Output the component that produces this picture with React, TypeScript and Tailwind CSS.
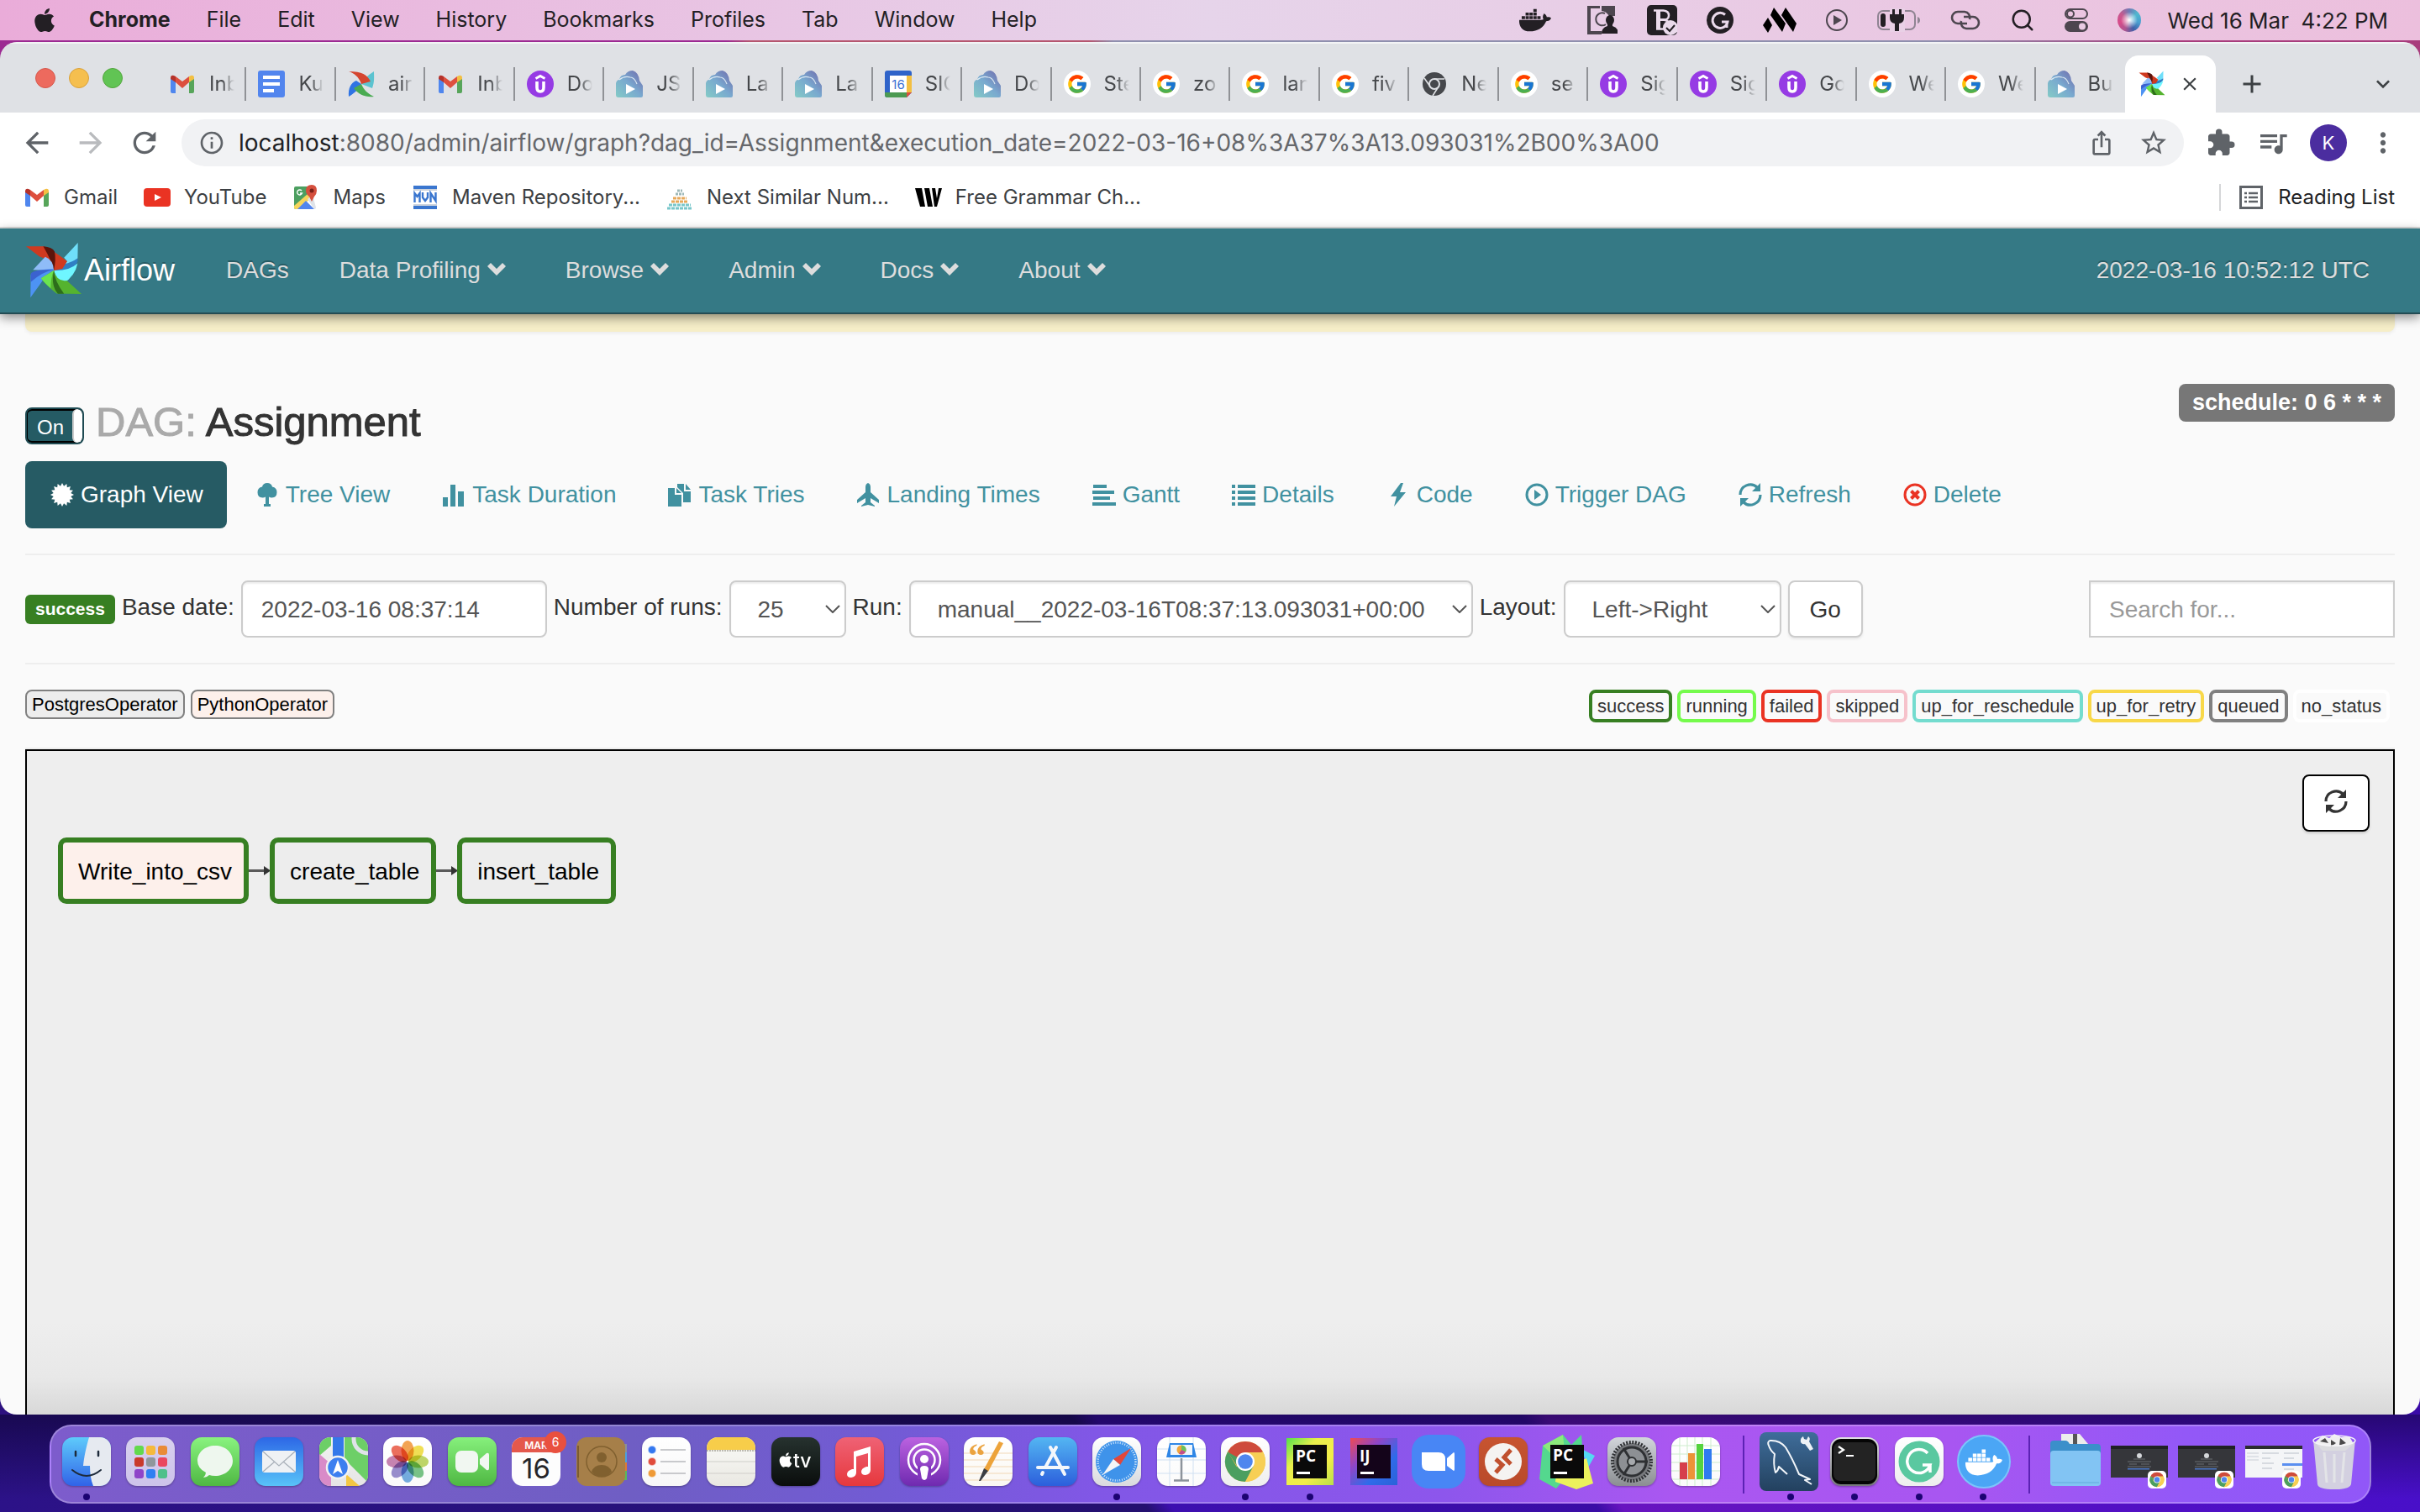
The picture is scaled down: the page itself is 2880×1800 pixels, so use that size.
import type { ReactNode } from "react";
import { FaApple, FaDocker } from "react-icons/fa";
import { FcGoogle } from "react-icons/fc";
import {
  MdArrowBack,
  MdArrowForward,
  MdRefresh,
  MdInfoOutline,
  MdIosShare,
  MdStarBorder,
  MdExtension,
  MdQueueMusic,
  MdMoreVert,
  MdAdd,
  MdClose,
  MdExpandMore,
} from "react-icons/md";
import { LuSearch } from "react-icons/lu";

/* ------------------------------------------------------------------ */
/* Shared logos                                                        */
/* ------------------------------------------------------------------ */

function Pinwheel({ size }: { size: number }) {
  return (
    <svg width={size} height={size} viewBox="32 28 206 204" aria-hidden="true">
      <path d="M222 30 L172 84 L183 97 L165 128 L221 86 Z" fill="#6fdffa" />
      <path d="M221 86 Q205 98 172 108 L135 130 L170 134 Q210 124 221 98 Z" fill="#2f7fc4" />
      <path d="M135 130 Q190 132 221 104 Q212 150 168 178 Q146 166 135 130 Z" fill="#6ff6ff" />
      <path d="M35 43 L100 43 Q134 58 183 97 L166 124 L135 130 Q120 88 84 80 Z" fill="#cf3a20" />
      <path d="M97 43 Q130 45 138 62 Q144 90 135 130 Q128 96 97 43 Z" fill="#5c140b" />
      <path d="M104 81 Q134 92 135 130 L60 128 Z" fill="#8fbcf8" />
      <path d="M52 146 Q68 126 135 124 L135 130 Q110 140 88 176 L51 228 Z" fill="#4d93f3" />
      <path d="M52 142 Q60 126 135 127 Q90 136 52 172 Z" fill="#3b62cf" />
      <path d="M135 130 L89 158 Q108 184 145 213 L235 215 L182 166 Q146 172 135 130 Z" fill="#55b32f" />
      <path d="M135 130 Q138 168 172 214 L150 214 Q124 186 135 130 Z" fill="#2d6d1b" />
      <path d="M135 130 L89 158 Q100 174 124 194 Q124 156 135 130 Z" fill="#6be34f" />
    </svg>
  );
}

function FlatPinwheel() {
  return (
    <svg width="32" height="32" viewBox="-1 -1 32 32" aria-hidden="true">
      <path d="M30 0 C22 5 17 10 15 15 L28 20 C31 12 30 6 30 0 Z" fill="#5cc3d0" />
      <path d="M0 0 C16 0 22 4 26 12 L15 15 C12 6 6 2 0 0 Z" fill="#d5452f" />
      <path d="M0 30 C-1 20 3 13 9 11 L15 15 C13 20 8 25 0 30 Z" fill="#2f74e4" />
      <path d="M30 30 C20 31 12 28 6 20 L15 15 C18 22 22 26 30 30 Z" fill="#4aab52" />
    </svg>
  );
}

function GmailIcon() {
  return (
    <svg width="32" height="32" viewBox="0 0 32 32" aria-hidden="true">
      <path d="M2 9 L8 13 V27 H4 Q2 27 2 25 Z" fill="#4f86ee" />
      <path d="M24 13 L30 9 V25 Q30 27 28 27 H24 Z" fill="#57a55a" />
      <path d="M2 9 Q2 5 6 6 L8 7 V14 L2 10 Z" fill="#b5322a" />
      <path d="M24 7 L26 6 Q30 5 30 9 V10 L24 14 Z" fill="#f3bf42" />
      <path d="M8 7 L16 13 L24 7 V14 L16 21 L8 14 Z" fill="#dd4f3e" />
    </svg>
  );
}

function DocsIcon() {
  return (
    <svg width="32" height="32" viewBox="0 0 32 32" aria-hidden="true">
      <rect width="32" height="32" rx="3" fill="#5285ee" />
      <path d="M6 6h20v4H6zM6 14h20v4H6zM6 22h13v4H6z" fill="#fff" />
    </svg>
  );
}

function UdemyIcon() {
  return (
    <svg width="32" height="32" viewBox="0 0 32 32" aria-hidden="true">
      <circle cx="16" cy="16" r="16" fill="#963be4" />
      <path d="M10.500 9.500 L16 6.500 L21.500 9.500" fill="none" stroke="#fff" strokeWidth="3" />
      <path d="M12 13 V20 Q12 25 16 25 Q20 25 20 20 V13" fill="none" stroke="#fff" strokeWidth="3.600" />
    </svg>
  );
}

function PlayFolderIcon() {
  return (
    <svg width="32" height="32" viewBox="0 0 32 32" aria-hidden="true">
      <defs>
        <linearGradient id="playfolder" x1="0" y1="1" x2="1" y2="0">
          <stop offset="0" stopColor="#84cbc6" />
          <stop offset="0.5" stopColor="#79a9cf" />
          <stop offset="1" stopColor="#7068ab" />
        </linearGradient>
      </defs>
      <path d="M0 15 Q1 11 4 11 Q5 5 11 5 Q14 0 20 0 Q27 2 28 12 L32 18 V30 Q32 32 30 32 H3 Q0 32 0 29 Z" fill="url(#playfolder)" />
      <path d="M4 11 Q10 6 17 8 Q22 8 25 16" fill="none" stroke="#dbe8f2" strokeWidth="1.2" />
      <path d="M12 16 L23 22 L12 28 Z" fill="#fff" />
    </svg>
  );
}

function CalendarFavicon() {
  return (
    <svg width="32" height="32" viewBox="0 0 32 32" aria-hidden="true">
      <path d="M3 0h26a3 3 0 0 1 3 3v23l-6 6H3a3 3 0 0 1-3-3V3a3 3 0 0 1 3-3z" fill="#2f63c9" />
      <path d="M26 6h6v20h-6z" fill="#f3bf42" />
      <path d="M0 26h26v6H3a3 3 0 0 1-3-3z" fill="#4c9a52" />
      <path d="M26 26h6l-6 6z" fill="#dd4f3e" />
      <path d="M6 6h20v20H6z" fill="#fff" />
      <text x="16" y="22" textAnchor="middle" fontSize="15" fontFamily="Inter, sans-serif" fill="#3b6fd4">16</text>
    </svg>
  );
}

function GoogleFavicon() {
  return (
    <span className="flex size-8 items-center justify-center rounded-full bg-white">
      <FcGoogle size={26} />
    </span>
  );
}

function MonoChromeIcon() {
  return (
    <svg width="32" height="32" viewBox="0 0 32 32" aria-hidden="true">
      <circle cx="16" cy="16" r="14" fill="#46484c" />
      <path d="M16 10 H28 M11 19 L4 9 M21 19 L14 30" stroke="#dfe1e5" strokeWidth="1.6" />
      <circle cx="16" cy="16" r="6" fill="#46484c" stroke="#dfe1e5" strokeWidth="2" />
    </svg>
  );
}

/* Chrome logo drawn around the origin in a circle of radius 24. */
function ChromeMark() {
  return (
    <g>
      <circle r="24" fill="#f2c94f" />
      <path d="M0 0 L-20.8 -12 A24 24 0 0 1 20.8 -12 Z" fill="#ce4b3c" />
      <path d="M-20.8 -12 A24 24 0 0 0 0 24 L10.4 6 L0 0 L-10.4 6 Z" fill="#4b9f60" />
      <path d="M0 -11 H21.3 A24 24 0 0 1 0 24 L9.5 5.5 Z" fill="#f7cf55" />
      <path d="M0 -11 H-20 L-9.5 5.5 Z" fill="#ce4b3c" />
      <path d="M-21 -11.5 L-9.5 5.5 L0 0 Z" fill="#4b9f60" />
      <circle r="11" fill="#fff" />
      <circle r="8.8" fill="#4f86ee" />
    </g>
  );
}

/* ------------------------------------------------------------------ */
/* macOS menu bar                                                      */
/* ------------------------------------------------------------------ */

const menus = ["File", "Edit", "View", "History", "Bookmarks", "Profiles", "Tab", "Window", "Help"];

function MenuBar() {
  return (
    <header className="flex h-12 shrink-0 items-center justify-between bg-linear-to-r from-[#eaacd9] via-[#e6d4ea] to-[#ecbfdd] pr-[38px] pl-[37px] text-[#231f24]">
      <nav className="flex items-center gap-[43px] text-[25px]">
        <FaApple size={32} aria-label="Apple menu" />
        <button className="-ml-1.5 font-bold">Chrome</button>
        {menus.map((m) => (
          <button key={m}>{m}</button>
        ))}
      </nav>
      <div className="flex items-center gap-[35px] text-[26px]">
        <FaDocker size={38} className="mr-2" />
        <svg width="36" height="34" viewBox="0 0 36 34">
          <path d="M2 0V32H17M2 1H15" fill="none" stroke="#4d464f" strokeWidth="4" />
          <path d="M17 0H33V12H26Q22 6 17 6Z" fill="#4d464f" />
          <path d="M21 9a7.500 7.500 0 1 0 1 13" fill="none" stroke="#4d464f" strokeWidth="2" />
          <ellipse cx="27" cy="17" rx="5" ry="6" fill="#231f24" />
          <path d="M17 33q0-7 7-9v-4h6v4q7 2 7 9z" fill="#231f24" />
        </svg>
        <svg width="36" height="36" viewBox="0 0 36 36">
          <rect width="36" height="36" rx="5" fill="#231f24" />
          <path d="M8 6.500H19.500Q26 7 26 12.500T19 17.500Q26 18 26 23T19 28.500H11" fill="none" stroke="#eadaeb" strokeWidth="2.500" />
          <path d="M11 6h5v23h-5zM16 16h5v3h-5z" fill="#eadaeb" />
          <circle cx="28" cy="27" r="9" fill="#eadaeb" />
          <path d="M23 27l4 4 6-7" fill="none" stroke="#231f24" strokeWidth="2" />
        </svg>
        <svg width="32" height="32" viewBox="0 0 32 32">
          <circle cx="16" cy="16" r="16" fill="#231f24" />
          <path d="M22 9.500A9 9 0 1 0 25 18H18M24 17v8" fill="none" stroke="#eadaeb" strokeWidth="3" />
        </svg>
        <svg width="40" height="30" viewBox="0 0 40 30">
          <path d="M6 12l5 9-5 9-6-9zM13 0l14 19-4 10L9 9zM27 0l13 19-4 10L22 9z" fill="#000" />
        </svg>
        <svg width="26" height="26" viewBox="0 0 26 26">
          <circle cx="13" cy="13" r="12" fill="none" stroke="#4d464f" strokeWidth="2" />
          <path d="M9 7l10 6-10 6z" fill="#4d464f" />
        </svg>
        <svg width="52" height="28" viewBox="0 0 52 28">
          <rect x="1" y="3" width="44" height="22" rx="6" fill="none" stroke="#8f8492" strokeWidth="2" />
          <path d="M48 10q3 1 3 4t-3 4z" fill="#8f8492" />
          <path d="M15 0h18v28H15z" fill="#e9d0e6" />
          <rect x="4" y="6" width="6" height="16" rx="3" fill="#231f24" />
          <path d="M18 1h3v6h5V1h3v6h3v4q0 6-6 7v9h-5v-9q-6-1-6-7V7h3z" fill="#231f24" />
        </svg>
        <svg width="36" height="24" viewBox="0 0 36 24" fill="none" stroke="#4d464f" strokeWidth="2.600">
          <path d="M20 16H9A7 7 0 0 1 9 2H17A7 7 0 0 1 23 11" />
          <path d="M16 8H27A7 7 0 0 1 27 22H19A7 7 0 0 1 13 13" />
        </svg>
        <LuSearch size={30} strokeWidth={2} />
        <svg width="28" height="28" viewBox="0 0 28 28">
          <rect x="1" y="1" width="26" height="11" rx="5.500" fill="none" stroke="#4d464f" strokeWidth="2" />
          <circle cx="7" cy="6.500" r="4" fill="none" stroke="#4d464f" strokeWidth="2" />
          <rect y="15" width="28" height="13" rx="6.500" fill="#4d464f" />
          <circle cx="21" cy="21.500" r="4" fill="#e9cbe3" />
        </svg>
        <span className="size-7 rounded-full bg-[radial-gradient(circle_at_50%_50%,#ffffff_0%,rgba(255,255,255,0.5)_25%,rgba(255,255,255,0)_50%),conic-gradient(#6d7bb5,#4fb8cf,#4a9fd0,#3f5fa8,#b0558f,#d84b8a,#c45a8f,#6d7bb5)]" />
        <time className="-ml-1 whitespace-pre">Wed 16 Mar  4:22 PM</time>
      </div>
    </header>
  );
}

/* ------------------------------------------------------------------ */
/* Browser chrome                                                      */
/* ------------------------------------------------------------------ */

const tabs: { icon: ReactNode; title: string }[] = [
  { icon: <GmailIcon />, title: "Inb" },
  { icon: <DocsIcon />, title: "Ku" },
  { icon: <FlatPinwheel />, title: "air" },
  { icon: <GmailIcon />, title: "Inb" },
  { icon: <UdemyIcon />, title: "Do" },
  { icon: <PlayFolderIcon />, title: "JS" },
  { icon: <PlayFolderIcon />, title: "La" },
  { icon: <PlayFolderIcon />, title: "La" },
  { icon: <CalendarFavicon />, title: "SIG" },
  { icon: <PlayFolderIcon />, title: "Do" },
  { icon: <GoogleFavicon />, title: "Ste" },
  { icon: <GoogleFavicon />, title: "zo" },
  { icon: <GoogleFavicon />, title: "lan" },
  { icon: <GoogleFavicon />, title: "fiv" },
  { icon: <MonoChromeIcon />, title: "Ne" },
  { icon: <GoogleFavicon />, title: "se" },
  { icon: <UdemyIcon />, title: "Sig" },
  { icon: <UdemyIcon />, title: "Sig" },
  { icon: <UdemyIcon />, title: "Go" },
  { icon: <GoogleFavicon />, title: "We" },
  { icon: <GoogleFavicon />, title: "We" },
  { icon: <PlayFolderIcon />, title: "Bu" },
];

function TabStrip() {
  return (
    <div className="flex h-[84px] items-end border-t-2 border-white/60 bg-[#dfe1e5]">
      <div className="flex h-full w-[187px] shrink-0 items-center gap-4 pl-[42px]">
        <button aria-label="Close window" className="size-6 rounded-full border border-[#d5574b] bg-[#ed6a5e]" />
        <button aria-label="Minimise window" className="size-6 rounded-full border border-[#d9a13b] bg-[#f5bf4f]" />
        <button aria-label="Zoom window" className="size-6 rounded-full border border-[#52a53c] bg-[#61c454]" />
      </div>
      <div className="flex h-[68px] min-w-0 flex-1 items-center" role="tablist">
        {tabs.map((t, i) => (
          <button
            key={i}
            role="tab"
            className="flex h-10 min-w-0 flex-1 items-center gap-4 border-r-2 border-[#909296] pl-3.5 text-[24px] text-[#45474a] nth-22:border-transparent"
          >
            <span className="shrink-0">{t.icon}</span>
            <span className="w-[30px] overflow-hidden mask-r-from-50% text-left whitespace-nowrap">{t.title}</span>
          </button>
        ))}
      </div>
      <div className="flex h-[68px] w-[351px] shrink-0 items-center">
        <button role="tab" aria-selected="true" className="flex h-full w-[108px] items-center gap-4 rounded-t-2xl bg-white pl-4">
          <Pinwheel size={32} />
          <MdClose size={26} className="text-[#3c4043]" />
        </button>
        <button aria-label="New tab" className="ml-[25px]">
          <MdAdd size={36} className="text-[#3c4043]" />
        </button>
        <button aria-label="Search tabs" className="mr-7 ml-auto">
          <MdExpandMore size={32} className="text-[#3c4043]" />
        </button>
      </div>
    </div>
  );
}

function Toolbar() {
  return (
    <div className="flex h-[72px] items-center gap-6 bg-white pr-[25px] pl-6 text-[#5f6368]">
      <button aria-label="Back"><MdArrowBack size={40} /></button>
      <button aria-label="Forward" className="text-[#b9bbbe]"><MdArrowForward size={40} /></button>
      <button aria-label="Reload"><MdRefresh size={40} /></button>
      <div className="flex h-14 min-w-0 flex-1 items-center rounded-full bg-[#f1f2f4] pr-[18px] pl-5">
        <MdInfoOutline size={32} className="shrink-0" />
        <div role="textbox" aria-label="Address" className="ml-4 flex-1 whitespace-nowrap text-[28px] text-[#65676b]">
          <span className="text-[#202124]">localhost</span>
          :8080/admin/airflow/graph?dag_id=Assignment&amp;execution_date=2022-03-16+08%3A37%3A13.093031%2B00%3A00
        </div>
        <button aria-label="Share" className="mr-7"><MdIosShare size={32} /></button>
        <button aria-label="Bookmark this page"><MdStarBorder size={36} /></button>
      </div>
      <button aria-label="Extensions" className="ml-0.5"><MdExtension size={36} /></button>
      <button aria-label="Media"><MdQueueMusic size={40} /></button>
      <button aria-label="Profile" className="flex size-11 items-center justify-center rounded-full bg-[#4b2d9f] text-[22px] text-white">K</button>
      <button aria-label="Menu"><MdMoreVert size={38} /></button>
    </div>
  );
}

const bookmarks: { icon: ReactNode; label: string }[] = [
  { icon: <GmailIcon />, label: "Gmail" },
  {
    icon: (
      <svg width="32" height="32" viewBox="0 0 32 32">
        <rect y="5" width="32" height="22" rx="4" fill="#ea3323" />
        <path d="M13 12l8 4-8 4z" fill="#fff" />
      </svg>
    ),
    label: "YouTube",
  },
  {
    icon: (
      <svg width="32" height="32" viewBox="0 0 32 32">
        <path d="M4 3h20v12L4 30Q2 30 2 28V5q0-2 2-2z" fill="#4c9f60" />
        <path d="M2 26L18 12l5 4L7 30H4q-2 0-2-2z" fill="#f6d55c" />
        <path d="M6 30l10-10 10 10z" fill="#5285ee" />
        <path d="M18 18l6-5 4 15q0 2-2 2z" fill="#dfe3e8" />
        <path d="M23 1q6 0 6 7 0 4-3 7l-3 6-3-6q-4-3-4-7 0-7 7-7z" fill="#d5503e" />
        <circle cx="23" cy="8" r="2.500" fill="#7b2018" />
        <path d="M11 8a3 3 0 1 0 0.500 3H9" fill="none" stroke="#fff" strokeWidth="1.400" />
      </svg>
    ),
    label: "Maps",
  },
  {
    icon: (
      <svg width="32" height="32" viewBox="0 0 32 32">
        <path d="M2 2h28v4H2zM2 26h28v4H2z" fill="#3a76cf" />
        <path d="M2 6h28v2H2zM2 24h28v2H2z" fill="#ccd3dd" />
        <path d="M3.500 22V11l3 4 3-4v11M13 10v6l3 4 3-4v-6M22.500 22V11l6 9V10" fill="none" stroke="#3a76cf" strokeWidth="2.400" />
      </svg>
    ),
    label: "Maven Repository...",
  },
  {
    icon: (
      <svg width="32" height="32" viewBox="0 0 32 32">
        <path d="M13 8h6M11 12h10" stroke="#9db8b8" strokeWidth="3" strokeDasharray="3 1" />
        <path d="M8 17h16M6 21h20" stroke="#e8a95b" strokeWidth="3" strokeDasharray="4 1" />
        <path d="M3 25h26M1 29h30" stroke="#79c7cb" strokeWidth="3" strokeDasharray="4 1" />
      </svg>
    ),
    label: "Next Similar Num...",
  },
  {
    icon: (
      <svg width="32" height="32" viewBox="0 0 32 32">
        <path d="M0 5h8l4 22H6zM11 5h6l4 22h-6zM20 5h4l2 12 2-12h4l-6 22h-3z" fill="#000" />
      </svg>
    ),
    label: "Free Grammar Ch...",
  },
];

function BookmarksBar() {
  return (
    <div className="flex h-[66px] items-center border-b-2 border-[#dcdcdc] bg-white pr-[30px] pb-1.5 pl-7 text-[24px] text-[#3c4043]">
      <div className="flex flex-1 gap-[31px]">
        {bookmarks.map((b) => (
          <a key={b.label} href="#" className="flex items-center gap-4">
            {b.icon}
            {b.label}
          </a>
        ))}
      </div>
      <div className="h-8 w-0.5 bg-[#d5d6d8]" />
      <button className="ml-5 flex items-center gap-4 text-[#202124]">
        <svg width="32" height="32" viewBox="0 0 32 32">
          <rect x="3.500" y="3.500" width="25" height="25" fill="none" stroke="#5f6368" strokeWidth="3" />
          <path d="M8 11h3M8 16h3M8 21h3M13 11h11M13 16h11M13 21h11" stroke="#5f6368" strokeWidth="2.500" />
        </svg>
        Reading List
      </button>
    </div>
  );
}

/* ------------------------------------------------------------------ */
/* Airflow page                                                        */
/* ------------------------------------------------------------------ */

function Chevron() {
  return (
    <svg width="28" height="28" viewBox="0 0 28 28" aria-hidden="true">
      <path d="M3 9l4-4 7 7 7-7 4 4-11 11z" fill="currentColor" />
    </svg>
  );
}

function Navbar() {
  return (
    <div className="relative z-10 flex h-[102px] shrink-0 items-center border-b-2 border-[#234c54] bg-[#357985] pr-[60px] pl-[30px] text-[28px] text-[#dddddd] shadow-[0_4px_12px_rgba(0,0,0,0.45)] [text-shadow:0_-2px_0_rgba(0,0,0,0.25)]">
      <a href="#" className="flex items-center gap-0.5 text-[36px] text-white">
        <Pinwheel size={68} />
        Airflow
      </a>
      <nav className="ml-[61px] flex items-center gap-[60px]">
        <a href="#">DAGs</a>
        {["Data Profiling", "Browse", "Admin", "Docs", "About"].map((n) => (
          <button key={n} className="mr-2 flex items-center gap-[5px]">
            {n}
            <Chevron />
          </button>
        ))}
      </nav>
      <time className="ml-auto">2022-03-16 10:52:12 UTC</time>
    </div>
  );
}

function burst(points: number, outer: number, inner: number) {
  return Array.from({ length: points * 2 }, (_, i) => {
    const r = i % 2 ? inner : outer;
    const a = (Math.PI * i) / points;
    return `${(14 + r * Math.sin(a)).toFixed(2)},${(14 - r * Math.cos(a)).toFixed(2)}`;
  }).join(" ");
}

function RefreshGlyph() {
  return (
    <svg width="28" height="28" viewBox="0 0 28 28" aria-hidden="true">
      <path d="M2 14A12 12 0 0 1 22.500 5.500" fill="none" stroke="currentColor" strokeWidth="3.200" />
      <path d="M26 14A12 12 0 0 1 5.500 22.500" fill="none" stroke="currentColor" strokeWidth="3.200" />
      <path d="M26 0V10H16Z M2 28V18H12Z" fill="currentColor" />
    </svg>
  );
}

const glyph = (children: ReactNode) => (
  <svg width="28" height="28" viewBox="0 0 28 28" fill="currentColor" aria-hidden="true">
    {children}
  </svg>
);

const views: { label: string; icon: ReactNode }[] = [
  { label: "Graph View", icon: glyph(<polygon points={burst(16, 14, 10.5)} />) },
  {
    label: "Tree View",
    icon: glyph(<path d="M14 0q5 0 6 4.500 5.500 1 5.500 6.500 0 6.500-6 6.500-2 0-3.500-1V25h2v3h-8v-3h2v-8.500q-1.500 1-3.500 1-6 0-6-6.500 0-5.500 5.500-6.500Q9 0 14 0z" />),
  },
  { label: "Task Duration", icon: glyph(<path d="M1 17h6v11H1zM10 2h6v26h-6zM19 10h7v18h-7z" />) },
  {
    label: "Task Tries",
    icon: glyph(
      <>
        <path d="M0 6h8v8h8v14H0z" />
        <path d="M10 6l6 6h-6z" />
        <path d="M11 1h8v9h8v13h-9V12l-7-7z" />
        <path d="M21 1l6 7h-6z" />
      </>,
    ),
  },
  {
    label: "Landing Times",
    icon: glyph(<path d="M13 0q3 1 3 5v6l10 9v4l-10-6v5l5 4v1l-8-2-8 2v-1l5-4v-5L0 24v-4l10-9V5q0-4 3-5z" />),
  },
  { label: "Gantt", icon: glyph(<path d="M1 2h16v4H1zM0 9h26v4H0zM1 16h20v4H1zM0 23h28v4H0z" />) },
  {
    label: "Details",
    icon: glyph(
      <path d="M0 2h4v4H0zM7 2h21v4H7zM0 9h4v4H0zM7 9h21v4H7zM0 16h4v4H0zM7 16h21v4H7zM0 23h4v4H0zM7 23h21v4H7z" />,
    ),
  },
  { label: "Code", icon: glyph(<path d="M17 0L5 16h7L9 28l14-17h-7l4-11z" />) },
  {
    label: "Trigger DAG",
    icon: glyph(
      <>
        <circle cx="14" cy="14" r="12" fill="none" stroke="currentColor" strokeWidth="3" />
        <path d="M11 8l8 6-8 6z" />
      </>,
    ),
  },
  { label: "Refresh", icon: <RefreshGlyph /> },
  {
    label: "Delete",
    icon: (
      <svg width="28" height="28" viewBox="0 0 28 28" className="text-[#ea3323]" aria-hidden="true">
        <circle cx="14" cy="14" r="12" fill="none" stroke="currentColor" strokeWidth="3" />
        <path d="M9.500 9.500l9 9M18.500 9.500l-9 9" stroke="currentColor" strokeWidth="4" />
      </svg>
    ),
  },
];

function Select({ id, label, value, width }: { id: string; label: string; value: string; width: string }) {
  return (
    <>
      <label htmlFor={id} className="pb-1">{label}</label>
      <div className={`relative ${width}`}>
        <select
          id={id}
          className="h-[68px] w-full appearance-none rounded-lg border-2 border-[#cccccc] bg-white pt-0.5 pl-8 text-[#555555] shadow-[inset_0_2px_2px_rgba(0,0,0,0.07)]"
        >
          <option>{value}</option>
        </select>
        <svg width="18" height="10" viewBox="0 0 18 10" className="pointer-events-none absolute top-[29px] right-[7px]">
          <path d="M1 1l8 8 8-8" fill="none" stroke="#555" strokeWidth="2" />
        </svg>
      </div>
    </>
  );
}

const states = [
  { name: "success", border: "border-[#377f22]" },
  { name: "running", border: "border-[#75fb4c]" },
  { name: "failed", border: "border-[#ea3323]" },
  { name: "skipped", border: "border-[#f6c2cb]" },
  { name: "up_for_reschedule", border: "border-[#74dccf]" },
  { name: "up_for_retry", border: "border-[#f8d849]" },
  { name: "queued", border: "border-[#808080]" },
  { name: "no_status", border: "border-white" },
];

function Edge() {
  return (
    <svg width="25" height="20" viewBox="0 0 25 20" aria-hidden="true">
      <path d="M0 9.500H20" stroke="#5a5a5a" strokeWidth="3" />
      <path d="M18 4L26 9.500L18 15Z" fill="#333" />
    </svg>
  );
}

function Node({ name, fill }: { name: string; fill: string }) {
  return (
    <button className={`h-[79px] rounded-[10px] border-6 border-[#377f22] pt-0.5 pr-3.5 pl-[18px] text-black ${fill}`}>{name}</button>
  );
}

function AirflowPage() {
  return (
    <div className="flex min-h-0 flex-1 flex-col bg-[#fafafa] font-['Liberation_Sans',Arial,sans-serif] text-[28px] text-[#333333]">
      <Navbar />
      <main className="flex min-h-0 flex-1 flex-col px-[30px]">
        <div className="h-[21px] shrink-0 rounded-b-lg bg-[#f6eec8] shadow-[0_2px_4px_rgba(0,0,0,0.06)]" />
        <div className="mt-[62px] flex items-start justify-between">
          <div className="mt-[18px] flex items-end gap-[14px]">
            <button
              role="switch"
              aria-checked="true"
              aria-label="Pause DAG"
              className="flex h-11 w-[70px] items-center justify-between overflow-hidden rounded-lg border-2 border-[#1f4b53] bg-[#255b64] text-[24px] text-white shadow-[inset_1px_0_0_#000,inset_0_2px_0_#000,inset_0_-2px_0_#000]"
            >
              <span className="pt-1 pl-3">On</span>
              <span className="h-full w-3 rounded-md border-l-2 border-[#cccccc] bg-white" />
            </button>
            <h1 className="text-[49px] leading-[54px] [-webkit-text-stroke:1px_currentColor]">
              <span className="text-[#aaaaaa]">DAG:</span> Assignment
            </h1>
          </div>
          <a href="#" className="flex h-[45px] items-center rounded-lg bg-[#777777] px-4 text-[27px] font-bold text-white">
            schedule: 0 6 * * *
          </a>
        </div>

        <nav className="mt-5 flex gap-1">
          {views.map((v, i) => (
            <a
              key={v.label}
              href="#"
              className={
                i === 0
                  ? "flex h-20 items-center gap-2 rounded-lg bg-[#265b64] pr-7 pl-[30px] whitespace-nowrap text-white"
                  : "flex h-20 items-center gap-2 pr-7 pl-[30px] whitespace-nowrap text-[#4191a0]"
              }
            >
              {v.icon}
              {v.label}
            </a>
          ))}
        </nav>

        <hr className="mt-[30px] border-t-2 border-[#eeeeee]" />

        <form className="mt-[30px] flex items-center gap-2 whitespace-nowrap" onSubmit={(e) => e.preventDefault()}>
          <span className="flex h-[35px] items-center rounded-md bg-[#377f22] px-3 text-[21px] font-bold text-white">success</span>
          <label htmlFor="base-date" className="pb-1">Base date:</label>
          <input
            id="base-date"
            defaultValue="2022-03-16 08:37:14"
            className="h-[68px] w-[364px] rounded-lg border-2 border-[#cccccc] bg-white px-[22px] pt-0.5 text-[#555555] shadow-[inset_0_2px_2px_rgba(0,0,0,0.07)]"
          />
          <Select id="num-runs" label="Number of runs:" value="25" width="w-[139px]" />
          <Select id="run" label="Run:" value="manual__2022-03-16T08:37:13.093031+00:00" width="w-[671px]" />
          <Select id="layout" label="Layout:" value="Left->Right" width="w-[259px]" />
          <button className="h-[68px] rounded-lg border-2 border-[#cccccc] bg-white px-6 pt-0.5 shadow-[0_2px_3px_rgba(0,0,0,0.08)]">Go</button>
          <input
            aria-label="Search"
            placeholder="Search for..."
            className="ml-auto h-[68px] w-[364px] border-2 border-[#cccccc] bg-white px-[22px] pt-0.5 shadow-[inset_0_2px_2px_rgba(0,0,0,0.07)] placeholder:text-[#999999]"
          />
        </form>

        <hr className="mt-[30px] border-t-2 border-[#eeeeee]" />

        <div className="mt-[30px] flex items-start justify-between text-[22px]">
          <div className="flex gap-[7px] text-black">
            <span className="flex h-[35px] items-center rounded-lg border-2 border-[#808080] bg-[#ededed] px-1.5">PostgresOperator</span>
            <span className="flex h-[35px] items-center rounded-lg border-2 border-[#808080] bg-[#fdf0eb] px-1.5">PythonOperator</span>
          </div>
          <div className="flex gap-1.5 pr-1.5">
            {states.map((s) => (
              <span key={s.name} className={`flex h-[39px] items-center rounded-lg border-4 px-1.5 ${s.border}`}>
                {s.name}
              </span>
            ))}
          </div>
        </div>

        <hr className="mt-[30px] border-t-2 border-[#eeeeee]" />

        <section className="relative min-h-0 flex-1 border-2 border-b-0 border-black bg-[#eeeeee] bg-[linear-gradient(to_top,#d8d8d8_0px,#e8e8e8_44px,#eeeeee_110px)]">
          <button
            aria-label="Refresh graph"
            className="absolute top-7 right-7 flex h-[68px] w-20 items-center justify-center rounded-lg border-2 border-black bg-white pb-1 shadow-[0_2px_3px_rgba(0,0,0,0.15)]"
          >
            <RefreshGlyph />
          </button>
          <div className="flex items-center pt-[103px] pl-[37px]">
            <Node name="Write_into_csv" fill="bg-[#fdf0eb]" />
            <Edge />
            <Node name="create_table" fill="bg-[#ededed]" />
            <Edge />
            <Node name="insert_table" fill="bg-[#ededed]" />
          </div>
        </section>
      </main>
    </div>
  );
}

/* ------------------------------------------------------------------ */
/* Dock                                                                */
/* ------------------------------------------------------------------ */

function Grad({ id, from, to }: { id: string; from: string; to: string }) {
  return (
    <defs>
      <linearGradient id={id} x1="0" y1="0" x2="0" y2="1">
        <stop offset="0" stopColor={from} />
        <stop offset="1" stopColor={to} />
      </linearGradient>
      <clipPath id={`${id}-clip`}>
        <rect width="58" height="58" rx="13" />
      </clipPath>
    </defs>
  );
}

function App58({ id, from, to, running, children }: { id: string; from: string; to: string; running?: boolean; children?: ReactNode }) {
  return (
    <DockItem running={running}>
      <svg width="58" height="58" viewBox="0 0 58 58" className="overflow-visible drop-shadow-[0_1px_1px_rgba(0,0,0,0.3)]">
        <Grad id={id} from={from} to={to} />
        <g clipPath={`url(#${id}-clip)`}>
          <rect width="58" height="58" fill={`url(#${id})`} />
          {children}
        </g>
      </svg>
    </DockItem>
  );
}

function DockItem({ running, children }: { running?: boolean; children: ReactNode }) {
  return (
    <div className="relative flex h-[58px] shrink-0 items-center justify-center">
      {children}
      {running && <span className="absolute top-[67px] left-1/2 size-2 -translate-x-1/2 rounded-full bg-[#1c0372]" />}
    </div>
  );
}

const launch = ["#62d94e", "#f5b93c", "#e98b38", "#c93a2c", "#8f969c", "#ea4660", "#8e44c9", "#2f80f2", "#4fc08b"];
const petals = ["#f2973b", "#f0dc3c", "#b7d254", "#68bd77", "#63a3dd", "#8b7fc9", "#c174a8", "#ea5b46"];

function JetBrains({ id, stops, label, purple }: { id: string; stops: string[]; label: string; purple?: boolean }) {
  return (
    <svg width="58" height="58" viewBox="0 0 58 58">
      <defs>
        <linearGradient id={id} x1="0" y1="0" x2="1" y2="1">
          {stops.map((c, i) => (
            <stop key={c} offset={i / (stops.length - 1)} stopColor={c} />
          ))}
        </linearGradient>
      </defs>
      <rect x="1" y="1" width="56" height="56" fill={`url(#${id})`} />
      <rect x="9" y="9" width="40" height="40" fill={purple ? "#14041a" : "#0a0a0a"} />
      <text x="12" y="29" fontSize="19" fontWeight="700" fontFamily="Open Sans, sans-serif" fill="#fff">{label}</text>
      <rect x="13" y="41" width="16" height="3" fill="#fff" />
    </svg>
  );
}

function Thumb({ light }: { light?: boolean }) {
  return (
    <DockItem>
      <svg width="68" height="58" viewBox="0 0 68 58" className="overflow-visible">
        <rect y="10" width="68" height="38" fill={light ? "#f4f5f7" : "#35363a"} />
        <rect y="10" width="68" height="4" fill={light ? "#2b2c2f" : "#202124"} />
        {light ? (
          <g>
            <path d="M2 19h14M2 23h14M2 27h14" stroke="#c9ced6" />
            <path d="M20 19h20M20 25h10M20 31h14M20 37h12M46 19h18M46 25h12M46 38h12" stroke="#b9c0c9" />
            <rect x="44" y="31" width="24" height="3" fill="#5b8ff0" />
          </g>
        ) : (
          <g>
            <circle cx="34" cy="22" r="3" fill="#d5d7da" />
            <path d="M27 26h14M20 29h28M22 32h9M36 32h10M20 35h28" stroke="#6a6c70" />
            <rect x="20" y="37" width="26" height="1.500" fill="#4b78c9" />
          </g>
        )}
        <rect x="44" y="40" width="22" height="21" rx="5" fill="#fff" />
        <g transform="translate(55 50.500) scale(0.36)">
          <ChromeMark />
        </g>
      </svg>
    </DockItem>
  );
}

function Dock() {
  return (
    <footer className="flex h-[116px] shrink-0 justify-center pt-3">
      <div className="flex h-[94px] items-start rounded-[26px] border-2 border-white/25 bg-[linear-gradient(to_right,#7d5ccc_0%,#6f5ec4_25%,#725bd4_36%,#8157e6_45%,#8d56ec_60%,#aa57f1_70%,#a856f1_82%,#9358f7_92%,#9157f8_100%)] pt-[13px] pr-4 pl-[13px]">
        <div className="flex w-[1974px] justify-between">
          <App58 id="finder" from="#5ecbfb" to="#3163e8" running>
            <path d="M32 0C28 14 26 24 25 34h8c0 9 1 17 4 24h21V0z" fill="#e6eaf0" />
            <path d="M16 17v5M43 17v5" stroke="#1d2a3a" strokeWidth="2.500" strokeLinecap="round" />
            <path d="M12 39q17 14 34 0" fill="none" stroke="#1d2a3a" strokeWidth="2" strokeLinecap="round" />
          </App58>
          <App58 id="launchpad" from="#d8d0ee" to="#cdc3ea">
            {launch.map((c, i) => (
              <rect key={c} x={10 + (i % 3) * 14} y={10 + Math.floor(i / 3) * 14} width="11" height="11" rx="3" fill={c} />
            ))}
          </App58>
          <App58 id="messages" from="#89f37f" to="#4fb843">
            <path d="M29 10c12 0 21 8 21 18s-9 18-21 18q-4 0-7-1-3 3-7 3 3-3 3-6-10-5-10-14c0-10 9-18 21-18z" fill="#eef7ee" />
          </App58>
          <App58 id="mail" from="#2d67e6" to="#58c3f8">
            <rect x="9" y="16" width="40" height="26" rx="3" fill="#eff1f4" />
            <path d="M10 17l19 17 19-17M10 41l14-12M48 41L34 29" fill="none" stroke="#a9b0b9" strokeWidth="1.300" />
          </App58>
          <App58 id="maps" from="#f2f2f2" to="#e5e5e5">
            <path d="M0 0h14v10L0 22zM30 0h28v54L30 26z" fill="#6dcf67" />
            <circle cx="58" cy="2" r="17" fill="none" stroke="#dfe3e8" strokeWidth="5" />
            <path d="M0 20l14 12v26H0z" fill="#d98bc8" />
            <path d="M16 0h13v34H16z" fill="#3478ea" />
            <path d="M32 58V44l16 14z" fill="#f3c744" />
            <circle cx="22" cy="36" r="13" fill="#3d7ff0" stroke="#f2f2f2" strokeWidth="2.500" />
            <path d="M22 27l6 17-6-4-6 4z" fill="#fff" />
          </App58>
          <App58 id="photos" from="#ffffff" to="#fafafa">
            {petals.map((c, i) => (
              <ellipse key={c} cx="29" cy="16" rx="7.500" ry="12" fill={c} opacity="0.88" transform={`rotate(${i * 45} 29 29)`} className="mix-blend-multiply" />
            ))}
          </App58>
          <App58 id="facetime" from="#86f07c" to="#4fb843">
            <rect x="9" y="16" width="27" height="26" rx="7" fill="#f1f7f1" />
            <path d="M38 26l8-7q3-1 3 2v16q0 3-3 2l-8-7z" fill="#f1f7f1" />
          </App58>
          <DockItem>
            <svg width="58" height="58" viewBox="0 0 58 58" className="overflow-visible">
              <rect width="58" height="58" rx="13" fill="#fdfdfd" />
              <path d="M0 18V13A13 13 0 0 1 13 0H45A13 13 0 0 1 58 13V18Z" fill="#e4584c" />
              <text x="29" y="14" textAnchor="middle" fontSize="12" fontWeight="600" fontFamily="Inter, sans-serif" fill="#fff">MAR</text>
              <text x="29" y="49" textAnchor="middle" fontSize="33" fontFamily="Inter, sans-serif" fill="#26262a">16</text>
              <circle cx="52" cy="6" r="13" fill="#e9503f" />
              <text x="52" y="11" textAnchor="middle" fontSize="14" fontFamily="Inter, sans-serif" fill="#fff">6</text>
            </svg>
          </DockItem>
          <DockItem>
            <svg width="60" height="58" viewBox="0 0 60 58">
              <path d="M54 8h6v10h-6z" fill="#8a9097" />
              <path d="M54 18h6v12h-6z" fill="#4aa0e0" />
              <path d="M54 30h6v10h-6z" fill="#e07a35" />
              <path d="M54 40h6v11h-6z" fill="#5bb85b" />
              <rect width="58" height="58" rx="12" fill="#a67f49" />
              <path d="M2 10v38" stroke="#7d5c30" strokeWidth="2" />
              <circle cx="30" cy="29" r="18" fill="none" stroke="#80602f" strokeWidth="1.500" />
              <circle cx="30" cy="24" r="6" fill="#80602f" />
              <path d="M18 41q3-8 12-8t12 8q-5 6-12 6t-12-6z" fill="#80602f" />
            </svg>
          </DockItem>
          <App58 id="reminders" from="#ffffff" to="#f7f7f7">
            {["#3478f0", "#e14c3c", "#ef9a36"].map((c, i) => (
              <g key={c}>
                <circle cx="12" cy={15 + i * 14} r="4" fill={c} stroke={c} strokeOpacity="0.4" strokeWidth="2" />
                <path d={`M22 ${15 + i * 14}h30`} stroke="#b7b9bd" strokeWidth="1.500" />
              </g>
            ))}
          </App58>
          <App58 id="notes" from="#fbfbf8" to="#e9e8e2">
            <path d="M0 0h58v15H0z" fill="#f7cd4a" />
            <path d="M0 16h58" stroke="#a8a59a" strokeWidth="1.500" strokeDasharray="2 1" />
            <path d="M0 29h58M0 43h58" stroke="#cfcec9" />
          </App58>
          <App58 id="tv" from="#26322f" to="#0a0d0c">
            <g transform="translate(7 17)" fill="#fff">
              <FaApple size={20} color="#fff" />
            </g>
            <text x="26" y="36" fontSize="23" fontWeight="500" fontFamily="Inter, sans-serif" fill="#fff">tv</text>
          </App58>
          <App58 id="music" from="#ef6275" to="#e6383d">
            <path d="M22 17l20-6v28q0 5-6 6-5 0-5-4t6-6h2V19l-14 4v19q0 5-6 6-5 0-5-4t6-6h2z" fill="#fff" />
          </App58>
          <App58 id="podcasts" from="#bb62e0" to="#6f2ab0">
            <circle cx="29" cy="27" r="19" fill="none" stroke="#fff" strokeWidth="2.500" />
            <circle cx="29" cy="27" r="12.500" fill="none" stroke="#fff" strokeWidth="2.500" />
            <path d="M21 34h16v16H21z" fill="#8237bd" />
            <circle cx="29" cy="26" r="5" fill="#fff" />
            <path d="M24 38q0-4 5-4t5 4l-2 11q-3 4-6 0z" fill="#fff" />
          </App58>
          <App58 id="pages" from="#ffffff" to="#faf7f2">
            <path d="M0 19h58M0 27h58M0 35h58M0 43h58M0 51h58" stroke="#f2d7b5" strokeWidth="1.200" />
            <text x="5" y="36" fontSize="42" fontWeight="700" fontFamily="Liberation Serif, serif" fill="#eba33f">“</text>
            <path d="M42 5l5 2-18 34-5-3z" fill="#eda33a" />
            <path d="M24 37l5 3-9 12-2 0z" fill="#3a3d42" />
          </App58>
          <App58 id="appstore" from="#53b6f2" to="#2c5fdc">
            <path d="M33 12L20 36M26 12l17 32M11 36h36M17 42l-1 2" stroke="#f4f7fb" strokeWidth="4" strokeLinecap="round" />
          </App58>
          <App58 id="safari" from="#ffffff" to="#d9dade" running>
            <circle cx="29" cy="29" r="25" fill="#3f93ea" />
            <circle cx="29" cy="29" r="22.500" fill="none" stroke="#d6eafc" strokeWidth="2.500" strokeDasharray="1 1.800" />
            <path d="M46 13L33 33l-8-7z" fill="#e2473b" />
            <path d="M12 45l13-19 8 7z" fill="#f4f5f6" />
          </App58>
          <App58 id="keynote" from="#ffffff" to="#fbfbfb">
            <path d="M15 0v58M43 0v58M0 27h58M0 43h58M0 14h58" stroke="#cfe0f2" strokeWidth="1" />
            <path d="M15 7h28l4 17H11z" fill="#2f86e6" />
            <rect x="16" y="9" width="26" height="12" fill="#eef5fc" />
            <circle cx="29" cy="15" r="5.500" fill="#f0a53b" />
            <path d="M29 15V9.500a5.500 5.500 0 0 1 5 8z" fill="#6ac15d" />
            <path d="M29 15l5 2.500a5.500 5.500 0 0 1-8 2z" fill="#c24d8d" />
            <path d="M29 25v26M20 51.500h18" stroke="#8c939b" strokeWidth="2.500" />
          </App58>
          <App58 id="chrome" from="#ffffff" to="#eeeeee" running>
            <g transform="translate(29 29)">
              <ChromeMark />
            </g>
          </App58>
          <DockItem running>
            <JetBrains id="pycharm" stops={["#52e04c", "#e9f04c", "#f2ee49", "#b9e04a"]} label="PC" />
          </DockItem>
          <DockItem>
            <JetBrains id="idea" stops={["#ef4a52", "#8f46c8", "#2f6bea", "#2a62d8"]} label="IJ" purple />
          </DockItem>
          <DockItem>
            <svg width="64" height="64" viewBox="0 0 64 64" className="-mx-[3px]">
              <rect width="64" height="64" rx="20" fill="#4886f5" />
              <path d="M12 21h20q8 0 8 8v14H20q-8 0-8-8zM42 28l8-7q1 0 1 2v18q0 2-1 2l-8-6z" fill="#fff" />
            </svg>
          </DockItem>
          <App58 id="remote" from="#c75430" to="#b94a2a">
            <circle cx="29" cy="29" r="22" fill="#f5f3f1" />
            <path d="M20 26l8 7-8 9M38 15l-8 9 8 8" fill="none" stroke="#c0502e" strokeWidth="5" />
          </App58>
          <DockItem>
            <svg width="66" height="66" viewBox="0 0 66 66" className="-mx-1">
              <path d="M4 14L28 1l10 12 12-12 2 28L20 65 0 54z" fill="#54d88e" />
              <path d="M4 14L28 1l4 40z" fill="#8bea7c" />
              <path d="M50 18l16 8-8 14z" fill="#53d9f2" />
              <path d="M20 46l36-17 8 30-20 7-25-9z" fill="#ecf25c" />
              <rect x="13" y="13" width="40" height="40" fill="#0a0a0a" />
              <text x="16" y="32" fontSize="19" fontWeight="700" fontFamily="Open Sans, sans-serif" fill="#fff">PC</text>
              <rect x="17" y="45" width="16" height="3" fill="#fff" />
            </svg>
          </DockItem>
          <App58 id="settings" from="#d2d6db" to="#8b8e92">
            <circle cx="29" cy="29" r="22" fill="#77797d" />
            <circle cx="29" cy="29" r="23" fill="none" stroke="#2e3033" strokeWidth="4" strokeDasharray="2 1.600" />
            <circle cx="29" cy="29" r="17" fill="#8d9094" stroke="#2e3033" strokeWidth="3" />
            <path d="M29 29H48M29 29L19 13M29 29L19 45" stroke="#2e3033" strokeWidth="3" />
            <circle cx="29" cy="29" r="5" fill="#a7aaae" stroke="#2e3033" strokeWidth="2" />
          </App58>
          <App58 id="numbers" from="#ffffff" to="#fafafa">
            <path d="M10 0v58M19 0v58M28 0v58M37 0v58M47 0v58M0 10h58M0 20h58M0 30h58M0 40h58M0 50h58" stroke="#cdeccc" />
            <path d="M10 30h9v20h-9z" fill="#d63f4b" />
            <path d="M20 19h8v31h-8z" fill="#ec9338" />
            <path d="M30 8h8v42h-8z" fill="#55d33f" />
            <path d="M39 14h9v36h-9z" fill="#2f7bf0" />
          </App58>
        </div>

        <div className="mx-[26px] -mt-0.5 h-[69px] w-0.5 bg-[#5c22b5]" />

        <div className="flex w-[288px] justify-between">
          <DockItem running>
            <svg width="70" height="70" viewBox="0 0 70 70" className="-ml-2 -mr-1">
              <defs>
                <linearGradient id="workbench" x1="0" y1="0" x2="0" y2="1">
                  <stop offset="0" stopColor="#3f6d9a" />
                  <stop offset="1" stopColor="#23415f" />
                </linearGradient>
              </defs>
              <rect width="70" height="70" rx="8" fill="url(#workbench)" />
              <path d="M12 10q12-1 19 8 8 13 16 32l13 6-6 1 8 5M12 10q-3 2-1 6 2 6 7 10-2 12 1 22 3-2 4-7l10 9" fill="none" stroke="#f2f6fa" strokeWidth="2" strokeLinejoin="round" />
              <path d="M52 5q-4 2-3 7 2 3 5 2l6 8 4-2-5-9q2-4-1-6l-2 4-3-1z" fill="#eef2f6" />
            </svg>
          </DockItem>
          <App58 id="terminal" from="#dfe0e2" to="#77797c" running>
            <rect x="2" y="2" width="54" height="54" rx="11" fill="#050505" />
            <rect x="4" y="6" width="50" height="46" rx="8" fill="#232323" />
            <path d="M10 11l6 4-6 4M19 22h9" fill="none" stroke="#fff" strokeWidth="2.200" />
          </App58>
          <App58 id="grammarly" from="#ffffff" to="#eeeeee" running>
            <circle cx="29" cy="29" r="24.500" fill="#5ac8a0" />
            <path d="M39 19A14 14 0 1 0 42 33H33M42 32v10" fill="none" stroke="#fff" strokeWidth="3.500" />
          </App58>
          <DockItem running>
            <svg width="64" height="64" viewBox="0 0 64 64" className="-mr-1 -ml-0.5">
              <circle cx="32" cy="32" r="31" fill="#4ba6f5" stroke="#7cc4fb" strokeWidth="2" />
              <g transform="translate(10 11)">
                <FaDocker size={44} color="#fff" />
              </g>
            </svg>
          </DockItem>
        </div>

        <div className="mx-6 -mt-0.5 h-[69px] w-0.5 bg-[#5c22b5]" />

        <div className="flex w-[364px] justify-between">
          <DockItem>
            <svg width="60" height="62" viewBox="0 0 60 62" className="-mt-1">
              <path d="M13 0h22l10 12v20H13z" fill="#ececec" />
              <path d="M27 0h5v14h-5z" fill="#555" />
              <path d="M0 12q0-4 4-4h14q3 0 5 4h33q4 0 4 4v10H0z" fill="#3b8fca" />
              <rect y="20" width="60" height="42" rx="4" fill="#82c4f3" />
              <path d="M2 58h56" stroke="#62a9dd" />
            </svg>
          </DockItem>
          <Thumb />
          <Thumb />
          <Thumb light />
          <DockItem>
            <svg width="52" height="66" viewBox="0 0 52 66" className="overflow-visible">
              <path d="M3 10L12 2l8 3 6-5 8 4 10-1 5 9-10 8H12z" fill="#f0f0f0" />
              <path d="M9 9l6-4 4 6zM22 7l6 4-6 4zM33 5l7 6-8 3z" fill="#4a4a4a" />
              <path d="M1 7q2 8 25 8t25-8l-5 53q-1 6-20 6T6 60z" fill="#d9dadd" fillOpacity="0.92" />
              <path d="M14 22l3 36M38 22l-3 36M26 24v34" stroke="#e3e4e7" strokeWidth="3" />
              <ellipse cx="26" cy="8" rx="25" ry="6" fill="none" stroke="#f4f4f6" strokeWidth="1.500" />
            </svg>
          </DockItem>
        </div>
      </div>
    </footer>
  );
}

export default function App() {
  return (
    <div className="flex h-screen flex-col overflow-hidden bg-[#2a1180] font-[Inter,sans-serif]">
      <MenuBar />
      <div className="flex min-h-0 flex-1 flex-col bg-[linear-gradient(to_right,#9c2a92_0%,#9c2a92_30%,#b5566f_31%,#b5566f_45%,#8f8fae_46%,#8f8fae_80%,#a83c7c_90%,#a83c7c_100%)] bg-[length:100%_60px] bg-no-repeat pt-0.5">
        <div className="flex min-h-0 flex-1 flex-col bg-[linear-gradient(to_right,#2d1180_0%,#12083a_30%,#1d0750_50%,#33085a_75%,#3a0aa8_100%)] bg-[length:100%_60px] bg-bottom bg-no-repeat">
          <div className="flex min-h-0 flex-1 flex-col overflow-hidden rounded-[20px]">
            <TabStrip />
            <Toolbar />
            <BookmarksBar />
            <AirflowPage />
          </div>
        </div>
      </div>
      <div className="bg-[linear-gradient(to_bottom,rgba(6,0,30,0.5)_0px,rgba(6,0,30,0)_100px),linear-gradient(50deg,#2c1288_0%,#241070_46%,#3d0fb0_47%,#3a0da6_64%,#6814c0_65%,#5210c4_85%,#460fca_100%)]">
        <Dock />
      </div>
    </div>
  );
}
